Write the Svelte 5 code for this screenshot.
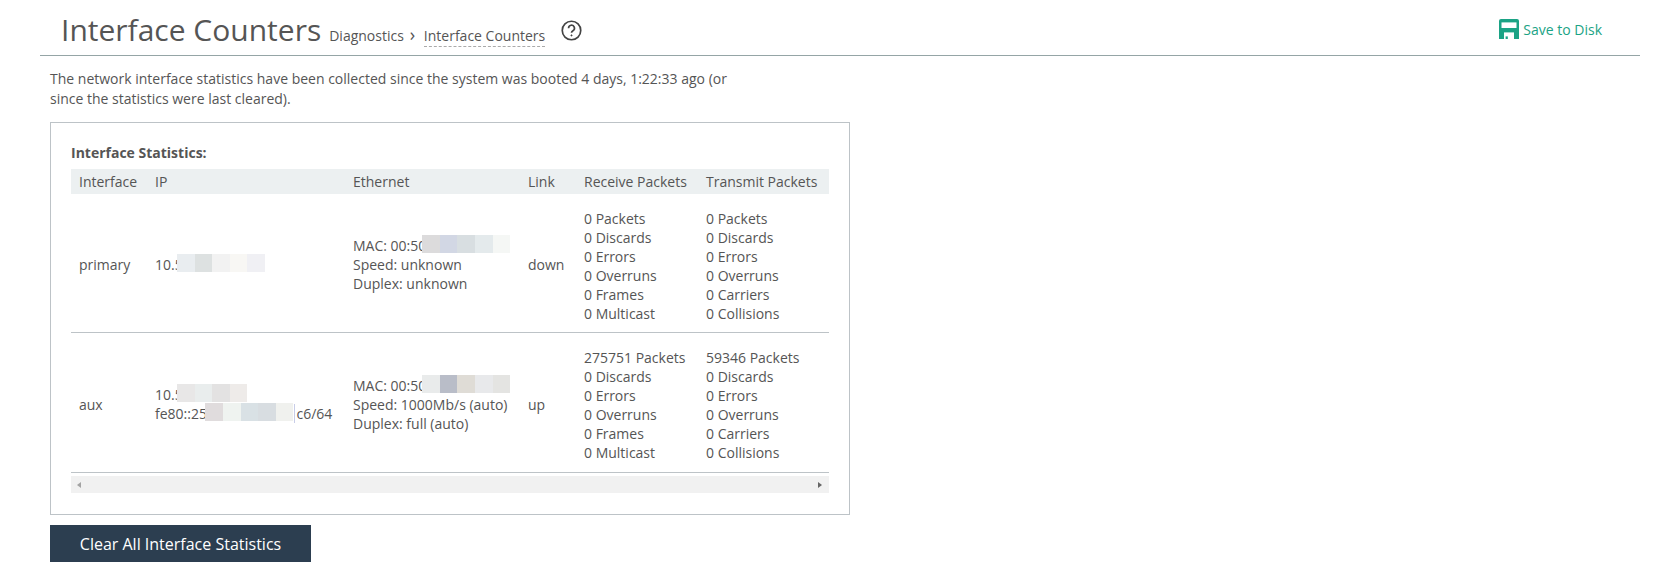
<script lang="ts">
	const rxLabels = ['Packets', 'Discards', 'Errors', 'Overruns', 'Frames', 'Multicast'];
	const txLabels = ['Packets', 'Discards', 'Errors', 'Overruns', 'Carriers', 'Collisions'];

	const interfaces = [
		{
			name: 'primary',
			ip: [{ text: '10.5', cut: true, blur: ['#e9edf0', '#dde1e1', '#f2f2f2', '#f8f7f4', '#f0f0f4'], tail: '' }],
			mac: ['#dcdbdc', '#d2d7e4', '#d8dee1', '#e4eaec', '#f5f7f5'],
			speed: 'unknown',
			duplex: 'unknown',
			link: 'down',
			rx: 0,
			tx: 0
		},
		{
			name: 'aux',
			ip: [
				{ text: '10.5', cut: true, blur: ['#e8e7e7', '#e9eded', '#e3e2e2', '#eeebe9'], tail: '' },
				{ text: 'fe80::25', cut: false, blur: ['#e0dcdd', '#eff3f0', '#d9e1e5', '#d8dde1', '#f0f1ee'], tail: 'c6/64' }
			],
			mac: ['#e9ebeb', '#b9bdc8', '#dfdcd6', '#e8e9eb', '#e4e4e2'],
			speed: '1000Mb/s (auto)',
			duplex: 'full (auto)',
			link: 'up',
			rx: 275751,
			tx: 59346
		}
	];
</script>

<div class="page">
	<header class="page-header">
		<h1>Interface Counters</h1>
		<nav class="crumbs">
			<span>Diagnostics</span>
			<span class="sep">›</span>
			<span class="current">Interface Counters</span>
		</nav>
		<svg class="help" width="21" height="21" viewBox="0 0 20 20" fill="none" stroke="#444" stroke-width="1.6">
			<circle cx="10" cy="10" r="8.8" />
			<path d="M7.2 7.8a2.8 2.8 0 1 1 4.2 2.4c-.9.5-1.4 1-1.4 2" />
			<circle cx="10" cy="14.7" r="0.6" fill="#444" stroke-width="0.7" />
		</svg>
		<a class="save" href="#save">
			<svg width="20" height="20" viewBox="0 0 20 20">
				<path fill="#1ba385" d="M2 0h16a2 2 0 0 1 2 2v18H0V2a2 2 0 0 1 2-2z" />
				<rect x="2.5" y="3.4" width="15" height="5.6" fill="#fff" />
				<rect x="5" y="13.4" width="10" height="6.6" fill="#fff" />
				<rect x="6.6" y="17.4" width="2.2" height="2.6" fill="#1ba385" />
			</svg>
			Save to Disk
		</a>
	</header>

	<main class="content">
		<p class="intro">
			The network interface statistics have been collected since the system was booted 4 days, 1:22:33 ago (or since the statistics were last cleared).
		</p>

		<section class="panel">
			<h2>Interface Statistics:</h2>
			<table>
				<thead>
					<tr>
						<th class="c-if">Interface</th>
						<th class="c-ip">IP</th>
						<th class="c-eth">Ethernet</th>
						<th class="c-link">Link</th>
						<th class="c-rx">Receive Packets</th>
						<th class="c-tx">Transmit Packets</th>
					</tr>
				</thead>
				<tbody>
					{#each interfaces as item}
						<tr>
							<td class="mid">{item.name}</td>
							<td class="mid">
								{#each item.ip as line}
									<div>
										{line.text}<span class="blurs" class:cut={line.cut}>{#each line.blur as colour}<i style="background: {colour}"></i>{/each}</span>{#if line.tail}<span class="tail">{line.tail}</span>{/if}
									</div>
								{/each}
							</td>
							<td class="mid">
								<div>MAC: 00:50<span class="blurs cut-mac">{#each item.mac as colour}<i style="background: {colour}"></i>{/each}</span></div>
								<div>Speed: {item.speed}</div>
								<div>Duplex: {item.duplex}</div>
							</td>
							<td class="mid">{item.link}</td>
							<td>
								{#each rxLabels as label, i}
									<div>{i === 0 ? item.rx : 0} {label}</div>
								{/each}
							</td>
							<td>
								{#each txLabels as label, i}
									<div>{i === 0 ? item.tx : 0} {label}</div>
								{/each}
							</td>
						</tr>
					{/each}
				</tbody>
			</table>
			<div class="scrollbar">
				<span class="arrow left"></span>
				<span class="arrow right"></span>
			</div>
		</section>

		<button type="button">Clear All Interface Statistics</button>
	</main>
</div>

<style>
	:global(body) {
		background: #fff;
		font-family: 'Open Sans', sans-serif;
		font-size: 14px;
		line-height: 19px;
		color: #555;
	}

	.page {
		padding: 0 23px 0 40px;
	}

	.page-header {
		display: flex;
		align-items: baseline;
		box-sizing: border-box;
		height: 56px;
		padding: 9px 38px 0 21px;
		border-bottom: 1px solid #95a5a6;
	}

	h1 {
		margin: 0;
		font-size: 30px;
		font-weight: 400;
		line-height: 41px;
		color: #555;
	}

	.crumbs {
		display: flex;
		align-items: baseline;
		gap: 6px;
		margin-left: 8px;
	}

	.sep {
		width: 8px;
		font-size: 18px;
		line-height: 19px;
	}

	.current {
		padding-bottom: 1px;
		border-bottom: 1px dashed #aaa;
	}

	.help {
		align-self: flex-start;
		margin: 11px 0 0 16px;
	}

	.save {
		display: flex;
		align-items: center;
		align-self: flex-start;
		gap: 4px;
		margin: 10px 0 0 auto;
		color: #1ba385;
		text-decoration: none;
	}

	.content {
		padding: 13px 0 0 10px;
	}

	.intro {
		width: 700px;
		margin: 0 0 13px;
		line-height: 20px;
	}

	.panel {
		box-sizing: border-box;
		width: 800px;
		height: 393px;
		padding: 20px 20px 0;
		border: 1px solid #bdc3c7;
	}

	h2 {
		margin: 0 0 7px;
		font-size: 14px;
		font-weight: 700;
		line-height: 19px;
	}

	table {
		width: 758px;
		border-collapse: collapse;
		table-layout: fixed;
	}

	th {
		box-sizing: border-box;
		height: 25px;
		padding: 3px 8px;
		background: #ecf0f1;
		font-weight: 400;
		text-align: left;
		white-space: nowrap;
	}

	.c-if { width: 76px; }
	.c-ip { width: 198px; }
	.c-eth { width: 175px; }
	.c-link { width: 56px; }
	.c-rx { width: 122px; }

	td {
		padding: 15px 0 10px 8px;
		border-bottom: 1px solid #bdc3c7;
		vertical-align: middle;
		white-space: nowrap;
	}

	td.mid {
		padding: 14px 0 11px 8px;
	}

	tr:first-child td {
		padding-bottom: 9px;
	}

	tr:first-child td.mid {
		padding-bottom: 12px;
	}

	.blurs {
		display: inline-flex;
		height: 18px;
		margin: -1px 0 0 -1.5px;
		vertical-align: top;
	}

	.blurs i {
		width: 17.6px;
		height: 18px;
	}

	.blurs.cut {
		margin-left: -5.6px;
	}

	.blurs.cut-mac {
		margin-left: -4px;
	}

	.tail {
		margin-left: 1px;
		padding-left: 1px;
		border-left: 1px solid #c8cde8;
	}

	.scrollbar {
		display: flex;
		align-items: center;
		justify-content: space-between;
		box-sizing: border-box;
		width: 758px;
		height: 17px;
		margin-top: 3px;
		padding: 0 7px 0 6px;
		background: #f1f1f1;
	}

	.arrow {
		border-top: 3px solid transparent;
		border-bottom: 3px solid transparent;
	}

	.arrow.left {
		border-right: 4px solid #a3a3a3;
	}

	.arrow.right {
		border-left: 4px solid #666;
	}

	button {
		display: block;
		width: 261px;
		height: 37px;
		margin-top: 10px;
		padding: 0;
		border: none;
		background: #2c3e50;
		color: #fff;
		font-family: inherit;
		font-size: 16px;
		line-height: 22px;
	}
</style>
